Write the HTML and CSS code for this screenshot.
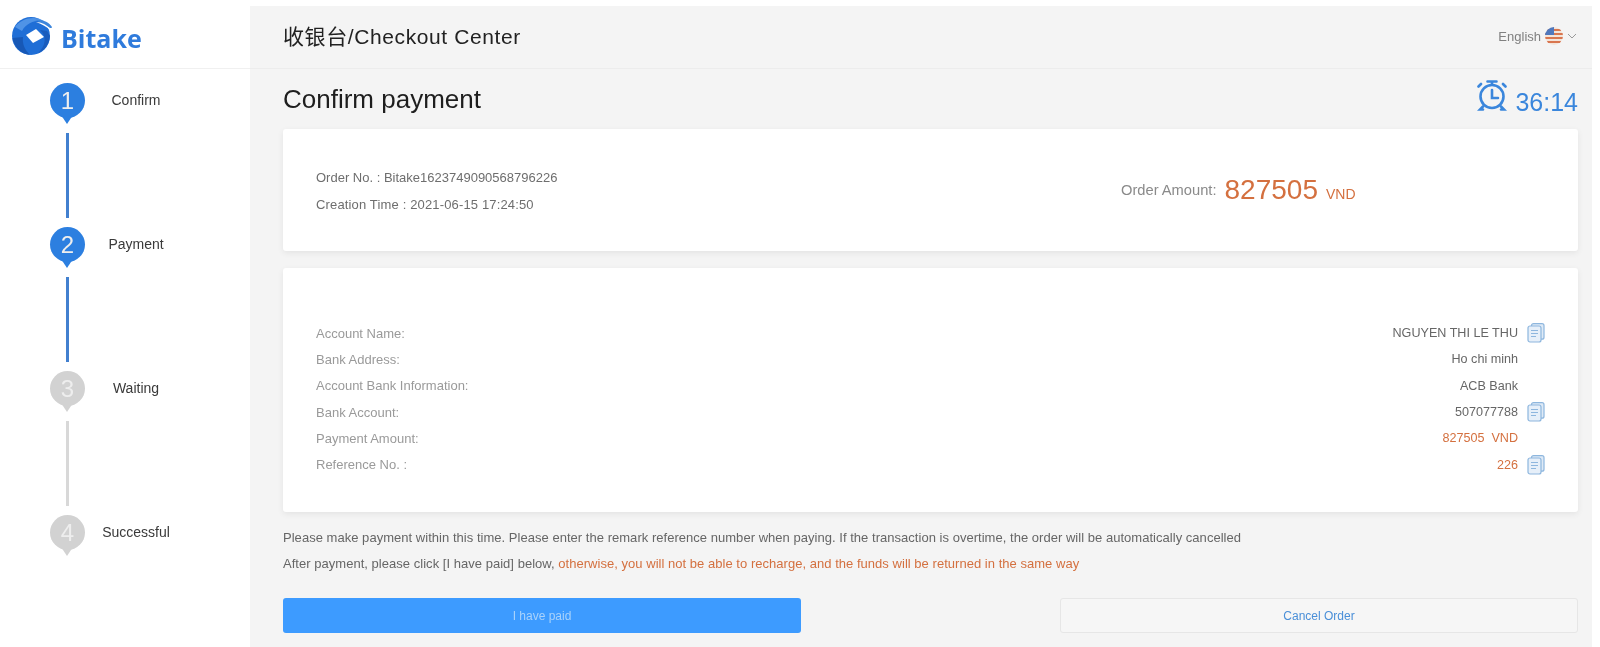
FILE: index.html
```html
<!DOCTYPE html>
<html>
<head>
  <meta charset="UTF-8">
  <title>Checkout Center</title>
  <link rel="stylesheet" href="styles.css">
</head>
<body>
  <!-- left column with logo and steps -->
  <aside class="sidebar">
    <div class="logo">
      <svg class="logo-mark" width="42" height="40" viewBox="0 0 42 40">
        <circle cx="20" cy="20" r="19" fill="#1f6ed6"/>
        <path d="M4 11 C10 2 24 -1 33 5 C24 4 15 7 11 15 Z" fill="#4f93e6"/>
        <path d="M1.5 22 C3 31 10 38 19 39 C14 34 11 28 12 21 Z" fill="#1758b6"/>
        <path d="M24 4 C31 3 38 6 41 11 C41 12 40 12 39 12 C35 9 30 6 24 4 Z" fill="#3d86dc"/>
        <path d="M25 6 C31 8 36 11 39 14 L39 13 C36 9 31 6 25 6 Z" fill="#fff"/>
        <path d="M29 14 C36 20 35 30 27 37 C33 35 38 29 39 20 L36 15 Z" fill="#1a5cbc"/>
        <path d="M25 13 L33 21 L22 27 L15 19 Z" fill="#fff"/>
      </svg>
      <span class="logo-text">Bitake</span>
    </div>
    <ol class="steps">
      <li class="step done">
        <div class="step-row"><span class="pin">1</span><span class="step-label">Confirm</span></div>
        <div class="link"></div>
      </li>
      <li class="step done">
        <div class="step-row"><span class="pin">2</span><span class="step-label">Payment</span></div>
        <div class="link"></div>
      </li>
      <li class="step">
        <div class="step-row"><span class="pin">3</span><span class="step-label">Waiting</span></div>
        <div class="link"></div>
      </li>
      <li class="step">
        <div class="step-row"><span class="pin">4</span><span class="step-label">Successful</span></div>
      </li>
    </ol>
  </aside>

  <main class="main">
    <header class="topbar">
      <h1 class="page-name">收银台/Checkout Center</h1>
      <div class="lang">
        <span>English</span>
        <svg width="18" height="18" viewBox="0 0 18 18">
          <defs><clipPath id="flagClip"><circle cx="9" cy="9" r="9"/></clipPath></defs>
          <g clip-path="url(#flagClip)">
            <rect width="18" height="18" fill="#f3e4da"/>
            <rect y="2" width="18" height="2" fill="#d9764f"/>
            <rect y="6" width="18" height="2" fill="#d9764f"/>
            <rect y="10" width="18" height="2" fill="#d9764f"/>
            <rect y="14" width="18" height="2" fill="#d9764f"/>
            <rect width="9" height="8" fill="#4f78bd"/>
          </g>
        </svg>
        <svg width="10" height="6" viewBox="0 0 10 6"><path d="M1 1 L5 5 L9 1" fill="none" stroke="#9a9a9a" stroke-width="1"/></svg>
      </div>
    </header>

    <div class="content">
      <div class="title-row">
        <h2 class="title">Confirm payment</h2>
        <div class="timer">
          <svg class="timer-icon" width="30" height="31" viewBox="0 0 30 31" fill="none" stroke="#3a86dc" stroke-width="2.6" stroke-linecap="round">
            <circle cx="15" cy="16.5" r="11.5"/>
            <path d="M15 10 V18 H21"/>
            <path d="M10.5 1.5 H19.5 M15 1.5 V4.5"/>
            <path d="M1.5 6.5 L4 4 M28.5 6.5 L26 4"/>
            <path d="M6 26.5 L3 29.5 H6 M24 26.5 L27 29.5 H24"/>
          </svg>
          <span>36:14</span>
        </div>
      </div>

      <section class="card order">
        <div class="order-info">
          <p>Order No. : Bitake1623749090568796226</p>
          <p class="order-time">Creation Time : 2021-06-15 17:24:50</p>
        </div>
        <div class="order-amount">
          <span class="amount-label">Order Amount:</span>
          <span class="amount-num">827505</span>
          <span class="amount-unit">VND</span>
        </div>
      </section>

      <section class="card account">
        <div class="row">
          <span class="row-name">Account Name:</span>
          <span class="row-value">NGUYEN THI LE THU</span>
          <svg class="copy" width="18" height="20" viewBox="0 0 18 20"><use href="#copyIcon"/></svg>
        </div>
        <div class="row">
          <span class="row-name">Bank Address:</span>
          <span class="row-value">Ho chi minh</span>
          <span class="copy"></span>
        </div>
        <div class="row">
          <span class="row-name">Account Bank Information:</span>
          <span class="row-value">ACB Bank</span>
          <span class="copy"></span>
        </div>
        <div class="row">
          <span class="row-name">Bank Account:</span>
          <span class="row-value">507077788</span>
          <svg class="copy" width="18" height="20" viewBox="0 0 18 20"><use href="#copyIcon"/></svg>
        </div>
        <div class="row">
          <span class="row-name">Payment Amount:</span>
          <span class="row-value orange">827505&nbsp; VND</span>
          <span class="copy"></span>
        </div>
        <div class="row">
          <span class="row-name">Reference No. :</span>
          <span class="row-value orange">226</span>
          <svg class="copy" width="18" height="20" viewBox="0 0 18 20"><use href="#copyIcon"/></svg>
        </div>
      </section>

      <p class="note">Please make payment within this time. Please enter the remark reference number when paying. If the transaction is overtime, the order will be automatically cancelled</p>
      <p class="note">After payment, please click [I have paid] below, <span class="orange">otherwise, you will not be able to recharge, and the funds will be returned in the same way</span></p>

      <div class="actions">
        <button class="btn btn-paid">I have paid</button>
        <button class="btn btn-cancel">Cancel Order</button>
      </div>
    </div>
  </main>

  <svg width="0" height="0" class="defs">
    <symbol id="copyIcon" viewBox="0 0 18 20">
      <rect x="4.5" y="0.7" width="12.5" height="15.5" rx="2" fill="#dfeaf6" stroke="#8db6de" stroke-width="1.2"/>
      <rect x="1" y="3" width="13" height="16" rx="2" fill="#e6eff9" stroke="#8db6de" stroke-width="1.2"/>
      <path d="M4 7.5 H11 M4 10.5 H11 M4 13.5 H9" stroke="#8db6de" stroke-width="1.1"/>
    </symbol>
  </svg>
</body>
</html>
```
FILE: styles.css
```css
* {
  box-sizing: border-box;
}
html, body {
  height: 100%;
}
body {
  margin: 0;
  display: flex;
  background-color: #fff;
  font-family: "Liberation Sans", "Noto Sans CJK SC", sans-serif;
  color: #333;
  overflow: hidden;
  filter: blur(0.5px);
}
.defs {
  position: absolute;
}

/* sidebar */
.sidebar {
  width: 250px;
  flex-shrink: 0;
}
.logo {
  height: 69px;
  padding: 16px 0 0 11px;
  display: flex;
  align-items: flex-start;
  border-bottom: 1px solid #f0f0f0;
}
.logo-mark {
  flex-shrink: 0;
}
.logo-text {
  margin: 4px 0 0 8px;
  font-family: "Open Sans", sans-serif;
  font-size: 25px;
  line-height: 36px;
  font-weight: 700;
  color: #2f7bdc;
}
.steps {
  list-style: none;
  margin: 0;
  padding: 14px 0 0 50px;
}
.step-row {
  display: flex;
  height: 40px;
}
.pin {
  position: relative;
  width: 35px;
  height: 35px;
  border-radius: 50%;
  background-color: #d2d2d2;
  color: #eee;
  font-size: 24px;
  line-height: 35px;
  text-align: center;
}
.pin::after {
  content: "";
  position: absolute;
  left: 11px;
  top: 32px;
  border-left: 6.5px solid transparent;
  border-right: 6.5px solid transparent;
  border-top: 9px solid #d2d2d2;
}
.step-label {
  width: 88px;
  margin-left: 7px;
  font-size: 14px;
  line-height: 35px;
  text-align: center;
  color: #3a3a3a;
}
.link {
  width: 3px;
  height: 85px;
  margin: 10px 0 9px 16px;
  background-color: #d8d8d8;
}
.done .pin {
  background-color: #2c7fe0;
}
.done .pin::after {
  border-top-color: #2c7fe0;
}
.done .link {
  background-color: #4280cf;
}

/* main column */
.main {
  width: 1342px;
  margin-top: 6px;
  background-color: #f4f4f4;
}
.topbar {
  height: 63px;
  padding: 0 15px 4px 33px;
  display: flex;
  align-items: center;
  justify-content: space-between;
  border-bottom: 1px solid #ececec;
}
.page-name {
  margin: 0;
  font-size: 21px;
  font-weight: 400;
  letter-spacing: 0.6px;
  color: #222;
}
.lang {
  display: flex;
  align-items: center;
  gap: 4px;
  margin-top: 2px;
  font-size: 13px;
  color: #808080;
}
.content {
  padding: 0 14px 0 33px;
}
.title-row {
  height: 60px;
  display: flex;
  align-items: center;
  justify-content: space-between;
}
.title {
  margin: 0;
  font-size: 26px;
  font-weight: 400;
  color: #1e1e1e;
}
.timer {
  display: flex;
  align-items: center;
  gap: 8px;
  font-size: 25px;
  color: #3a86dc;
}
.timer-icon {
  margin-top: -8px;
}
.timer span {
  padding-top: 6px;
}
.card {
  background-color: #fff;
  border-radius: 3px;
  box-shadow: 0 2px 6px rgba(0, 0, 0, 0.07);
}
.order {
  height: 122px;
  padding: 2px 33px 0;
  display: flex;
  align-items: center;
}
.order-info {
  width: 805px;
  font-size: 13px;
  color: #6e6e6e;
}
.order-info p {
  margin: 0;
  line-height: 27px;
}
.order-info .order-time {
  letter-spacing: 0.15px;
}
.order-amount {
  display: flex;
  align-items: baseline;
  gap: 8px;
  margin-top: -2px;
  font-size: 14px;
  color: #8a8a8a;
}
.amount-label {
  font-size: 14.7px;
  position: relative;
  top: -4px;
}
.amount-num {
  font-size: 28px;
  color: #d4703f;
}
.amount-unit {
  color: #d4703f;
}
.account {
  height: 244px;
  margin-top: 17px;
  padding: 52px 33px 0;
}
.row {
  height: 26.3px;
  display: flex;
  align-items: center;
  font-size: 13px;
  color: #9a9a9a;
}
.row-name {
  flex: 1;
}
.row-value {
  font-size: 12.6px;
  color: #666;
}
.copy {
  width: 18px;
  margin-left: 9px;
}
.orange {
  color: #d4703f;
}
.note {
  margin: 0;
  font-size: 13px;
  line-height: 26px;
  letter-spacing: 0.03px;
  color: #666;
}
.account + .note {
  margin-top: 13px;
}
.actions {
  margin-top: 21px;
  display: flex;
  justify-content: space-between;
}
.btn {
  width: 518px;
  height: 35px;
  border-radius: 3px;
  font-family: inherit;
  font-size: 12px;
}
.btn-paid {
  border: 0;
  background-color: #3d9bff;
  color: #a9d2fb;
}
.btn-cancel {
  background-color: #f6f6f6;
  border: 1px solid #e6e6e6;
  color: #4a8fd8;
}
```
